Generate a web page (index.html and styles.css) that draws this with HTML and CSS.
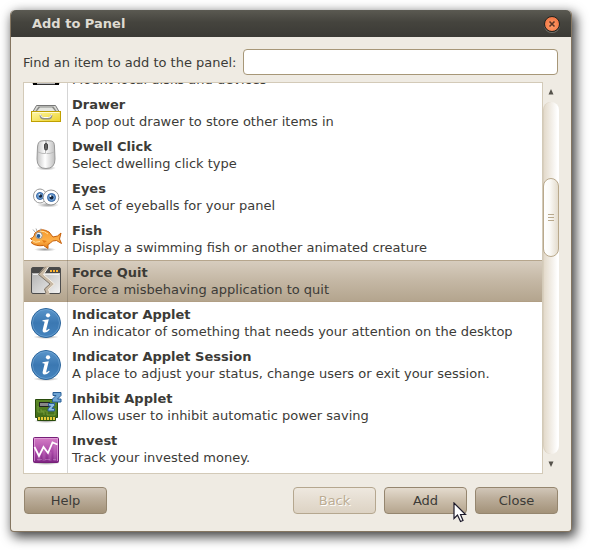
FILE: index.html
```html
<!DOCTYPE html>
<html lang="en">
<head>
<meta charset="utf-8">
<title>Add to Panel</title>
<link rel="stylesheet" href="styles.css">
</head>
<body>
<svg class="defs" width="0" height="0" aria-hidden="true">
  <defs>
    <linearGradient id="yellow" x2="1" y2="1"><stop stop-color="#fff9a8"/><stop offset="1" stop-color="#ecd22a"/></linearGradient>
    <linearGradient id="grey" x2="1" y2="0"><stop stop-color="#c4c4c4"/><stop offset=".45" stop-color="#fff"/><stop offset="1" stop-color="#bdbdbd"/></linearGradient>
    <linearGradient id="blue" x2="0" y2="1"><stop stop-color="#5b96cb"/><stop offset=".5" stop-color="#3b78b2"/><stop offset="1" stop-color="#4584be"/></linearGradient>
    <linearGradient id="orange" x2="0" y2="1"><stop stop-color="#f79a2c"/><stop offset=".6" stop-color="#fdb04a"/><stop offset="1" stop-color="#e47a12"/></linearGradient>
    <linearGradient id="green" x2="0" y2="1"><stop stop-color="#5d8a27"/><stop offset="1" stop-color="#3c6615"/></linearGradient>
    <linearGradient id="purple" x2="0" y2="1"><stop stop-color="#d57fc6"/><stop offset=".6" stop-color="#a845a6"/><stop offset="1" stop-color="#7d2482"/></linearGradient>
    <linearGradient id="pane" x2="1" y2="1"><stop stop-color="#aaa"/><stop offset="1" stop-color="#f4f4f4"/></linearGradient>
    <radialGradient id="shade"><stop stop-color="#000" stop-opacity=".4"/><stop offset="1" stop-color="#000" stop-opacity="0"/></radialGradient>
    <g id="info">
      <ellipse cx="16" cy="30" rx="13" ry="2" fill="url(#shade)"/>
      <circle cx="16" cy="16" r="14.5" fill="url(#blue)" stroke="#2b659c"/>
      <circle cx="16" cy="16" r="13.5" fill="none" stroke="#78abd9" stroke-opacity=".6"/>
      <circle cx="18" cy="8.3" r="2.1" fill="#fff"/>
      <path d="M12.5 13.2 18.8 12.3 16.3 22.3Q16 24 17.3 23.1L19 21.8 19.7 22.7Q16.8 25.8 14.3 25.5 12 25.2 12.8 22.2L14.6 15Q14.8 14.2 12.5 14.3Z" fill="#fff"/>
    </g>
  </defs>
</svg>

<main class="window">
  <header class="titlebar">
    <h1 class="title">Add to Panel</h1>
    <button class="close" type="button" aria-label="Close window"><svg width="8" height="8" viewBox="0 0 8 8"><path d="M1.5 1.5 6.5 6.5M6.5 1.5 1.5 6.5" stroke="#5b3525" stroke-width="1.6"/></svg></button>
  </header>
  <form class="content">
    <div class="find">
      <label for="search">Find an item to add to the panel:</label>
      <input id="search" class="entry" type="text">
    </div>

    <div class="browser">
      <ul class="items" role="listbox" aria-label="Panel items">
        <li class="item" role="option" aria-selected="false">
          <span class="icon"><svg width="32" height="32" viewBox="0 0 32 32"><path d="M3 20H29V28Q29 29.5 27 29.5H5Q3 29.5 3 28Z" fill="#b8b8bb" stroke="#333" /><path d="M3 28.5H7M25 28.5H29" stroke="#000" stroke-width="3"/></svg></span>
          <span class="text last-line"><span>Mount local disks and devices</span></span>
        </li>
        <li class="item" role="option" aria-selected="false">
          <span class="icon"><svg width="32" height="32" viewBox="0 0 32 32"><path d="M6.5 8.5H25.5L29 14.5H3Z" fill="#d9dad6" stroke="#777"/><path d="M8.5 9.5H23.5L26.5 14H5.5Z" fill="#8b8c88"/><path d="M10 10.5H22L25 14H7Z" fill="#e4e5e1"/><rect x="1.5" y="14.500" width="29" height="10" fill="url(#yellow)" stroke="#c0a000"/><path d="M2.5 15.500H29.5" stroke="#fffbd0"/><path d="M10.5 18Q11 21.500 13.500 21.500H18.500Q21 21.500 21.500 18" fill="none" stroke="#8f8f88" stroke-width="2"/><path d="M10.5 17.500Q11 20.500 13.500 20.500H18.500Q21 20.500 21.500 17.500" fill="none" stroke="#fff"/></svg></span>
          <span class="text"><strong>Drawer</strong><span>A pop out drawer to store other items in</span></span>
        </li>
        <li class="item" role="option" aria-selected="false">
          <span class="icon"><svg width="32" height="32" viewBox="0 0 32 32"><ellipse cx="16" cy="29" rx="10" ry="2.500" fill="url(#shade)"/><path d="M7.500 8Q8 2.500 11 2Q16 1 21.500 2Q24.500 2.500 24.500 8L25 20Q25 29.500 16 29.500T7 20Z" fill="url(#grey)" stroke="#999"/><path d="M8 13Q12 15 15.500 14.500V11M24 13Q20 15 16.500 14.500" fill="none" stroke="#bbb"/><path d="M16 2V5" stroke="#888"/><rect x="14.500" y="4.500" width="3" height="6.500" rx="1.500" fill="#666" stroke="#444"/></svg></span>
          <span class="text"><strong>Dwell Click</strong><span>Select dwelling click type</span></span>
        </li>
        <li class="item" role="option" aria-selected="false">
          <span class="icon"><svg width="32" height="32" viewBox="0 0 32 32"><ellipse cx="18" cy="24" rx="11" ry="2.500" fill="url(#shade)"/><ellipse cx="10" cy="15" rx="6.500" ry="7" fill="#fff" stroke="#999"/><circle cx="10" cy="15" r="3.500" fill="#6e9fd2" stroke="#3465a4"/><circle cx="10.500" cy="15" r="1.700" fill="#13243c"/><circle cx="9.500" cy="13.700" r=".8" fill="#fff"/><ellipse cx="21" cy="16.500" rx="7.800" ry="7.500" fill="#fff" stroke="#999"/><circle cx="21.500" cy="16.500" r="4" fill="#6e9fd2" stroke="#3465a4"/><circle cx="21.500" cy="16.500" r="2" fill="#13243c"/><circle cx="20.500" cy="15" r=".9" fill="#fff"/></svg></span>
          <span class="text"><strong>Eyes</strong><span>A set of eyeballs for your panel</span></span>
        </li>
        <li class="item" role="option" aria-selected="false">
          <span class="icon"><svg width="32" height="32" viewBox="0 0 32 32"><ellipse cx="15" cy="26.500" rx="11" ry="2" fill="url(#shade)"/><path d="M8 8Q12 5 19 9L23 14 27.500 13 31 10 29.500 16 31.500 20.500 26.500 17.500 22.500 18Q20 21 18 21.500L18 25.500 13.500 22.500Q6 23.500 1.500 20L2.500 17.500 .5 15.500Q4 15 5 10Z" fill="url(#orange)" stroke="#c55f0b"/><path d="M12 17 17 18 14 20Z" fill="#e37b16"/><path d="M2 17.500Q5 20.500 10 18.500M10 8Q15 8 18 11" fill="none" stroke="#ffe0a0"/><circle cx="9" cy="12.500" r="3.300" fill="#fff" stroke="#989086"/><circle cx="8.500" cy="13" r="1.900" fill="#285c94"/><path d="M5 9 3 6.500M7 8 6 5.500M10 8 11 5.500" stroke="#aaa"/></svg></span>
          <span class="text"><strong>Fish</strong><span>Display a swimming fish or another animated creature</span></span>
        </li>
        <li class="item selected" role="option" aria-selected="true">
          <span class="icon"><svg width="32" height="32" viewBox="0 0 32 32"><rect x="1.500" y="2.500" width="29" height="26" rx="1.500" fill="url(#pane)" stroke="#4c4c4c"/><path d="M2 3H30V8H2Z" fill="#494949"/><path d="M3 9.500H29" stroke="#fff" stroke-opacity=".7"/><path d="M20 6H22M23 6H25M26 6H28" stroke="#ffb52f" stroke-width="2"/><path d="M15 1 8.500 9 20 19 14 24 16 30H20L18.500 25 24.500 19 13.500 9.500 19 1Z" fill="#c8b9a5"/><path d="M15.500 2 8.500 9.500 20 19 14.500 24 16 28" fill="none" stroke="#7c7469"/><path d="M18.500 2 13.500 9.500 24.500 19 18.500 24.500 20 28" fill="none" stroke="#f7f2e9"/></svg></span>
          <span class="text"><strong>Force Quit</strong><span>Force a misbehaving application to quit</span></span>
        </li>
        <li class="item" role="option" aria-selected="false">
          <span class="icon"><svg width="32" height="32" viewBox="0 0 32 32"><use href="#info"/></svg></span>
          <span class="text"><strong>Indicator Applet</strong><span>An indicator of something that needs your attention on the desktop</span></span>
        </li>
        <li class="item" role="option" aria-selected="false">
          <span class="icon"><svg width="32" height="32" viewBox="0 0 32 32"><use href="#info"/></svg></span>
          <span class="text"><strong>Indicator Applet Session</strong><span>A place to adjust your status, change users or exit your session.</span></span>
        </li>
        <li class="item" role="option" aria-selected="false">
          <span class="icon"><svg width="32" height="32" viewBox="0 0 32 32"><ellipse cx="16" cy="30" rx="12" ry="2" fill="url(#shade)"/><path d="M5.500 8.500H27.500V26.500H25.500V29.500H7.500V26.500H5.500Z" fill="url(#green)" stroke="#284b0c"/><path d="M8 27.500H26" stroke="#e6c937" stroke-width="3" stroke-dasharray="2 1"/><path d="M8 15V21H14V24M17 20V24H25V17M11 18V20H16" fill="none" stroke="#83ac45" stroke-opacity=".7"/><rect x="9.500" y="11.500" width="10" height="4" fill="#888" stroke="#222"/><path d="M18.500 12.500H24.500V14.500L22 17.500H24.500V20H18V18L20.500 15H18.500Z" fill="#8ebbe2" stroke="#285f96"/><path d="M23 1.500H31V4.500L27.500 8H31V11H22.500V8L26 4.500H23Z" fill="#70a5d4" stroke="#285f96"/></svg></span>
          <span class="text"><strong>Inhibit Applet</strong><span>Allows user to inhibit automatic power saving</span></span>
        </li>
        <li class="item" role="option" aria-selected="false">
          <span class="icon"><svg width="32" height="32" viewBox="0 0 32 32"><ellipse cx="16" cy="30" rx="14" ry="2" fill="url(#shade)"/><rect x="3.500" y="4.500" width="25" height="25" rx="1" fill="url(#purple)" stroke="#762078"/><path d="M4.500 28V5.500H27.500V28" fill="none" stroke="#e6a8df" stroke-opacity=".7"/><path d="M9 21V28M14 17V28M20 19V28M25 12V28" stroke="#db9ad5" stroke-opacity=".25" stroke-width="3"/><path d="M4.500 14 9 23 13.500 14 18 20 22.500 9.500 27.500 11.500" fill="none" stroke="#fff" stroke-width="1.800"/><path d="M7 26.500H26" stroke="#d8a1dc" stroke-opacity=".4" stroke-dasharray="5 3"/></svg></span>
          <span class="text"><strong>Invest</strong><span>Track your invested money.</span></span>
        </li>
      </ul>
      <div class="scrollbar">
        <button class="step" type="button" aria-label="Scroll up"><svg width="6" height="6" viewBox="0 0 6 6"><path d="M3 0 5.500 5.500H.5Z" fill="#55524b"/></svg></button>
        <div class="trough"><div class="thumb"><i></i><i></i><i></i></div></div>
        <button class="step" type="button" aria-label="Scroll down"><svg width="6" height="6" viewBox="0 0 6 6"><path d="M3 6 5.500 .5H.5Z" fill="#55524b"/></svg></button>
      </div>
    </div>

    <footer class="actions">
      <button class="button help" type="button">Help</button>
      <button class="button" type="button" disabled>Back</button>
      <button class="button hover" type="button">Add<svg class="pointer" width="14" height="21" viewBox="0 0 14 21"><path d="M1 1V16.500L4.500 13 7.500 19.500 10 18.500 7.500 12.500H12.500Z" fill="#fff" stroke="#1d1a2a" stroke-width="1.200"/></svg></button>
      <button class="button" type="button">Close</button>
    </footer>
  </form>
</main>
</body>
</html>
```
FILE: styles.css
```css
* {
  box-sizing: border-box;
}

body {
  display: flex;
  height: 100vh;
  margin: 0;
  padding: 10px 18px 18px 10px;
  background: #fff;
  color: #3c3b37;
  font: 13px/17px "DejaVu Sans", sans-serif;
}

button,
input {
  color: inherit;
  font: inherit;
}

.defs {
  position: absolute;
}

.window {
  display: flex;
  flex: 1;
  flex-direction: column;
  min-width: 0;
  border: 1px solid #857661;
  border-top: 0;
  border-radius: 5px 5px 4px 4px;
  background: #efebe3;
  box-shadow: 3px 4px 12px 1px rgba(0, 0, 0, 0.75);
}

.titlebar {
  display: flex;
  align-items: center;
  justify-content: space-between;
  height: 27px;
  padding: 0 11px 0 21px;
  border-radius: 5px 5px 0 0;
  background: linear-gradient(#5b5a52, #45443e 45%, #3b3a35);
}

.title {
  margin: 0;
  color: #dfdbd2;
  font-size: 13px;
}

.close {
  display: flex;
  align-items: center;
  justify-content: center;
  width: 16px;
  height: 16px;
  padding: 0;
  border: 1px solid #25241f;
  border-radius: 50%;
  background: radial-gradient(circle at 50% 60%, #ff9d68, #f47a48 70%, #d9633c);
  box-shadow: 0 1px 0 #77756e;
}

.content {
  display: flex;
  flex: 1;
  flex-direction: column;
  min-height: 0;
  padding: 12px 12px 17px;
}

.find {
  display: flex;
  align-items: center;
  gap: 6px;
  margin-bottom: 7px;
  padding-right: 1px;
}

.entry {
  flex: 1;
  min-width: 0;
  height: 26px;
  padding: 0 6px;
  border: 1px solid #a79778;
  border-radius: 4px;
  outline: 0;
  background: #fff;
}

.browser {
  display: flex;
  flex: 1;
  min-height: 0;
}

.items {
  display: flex;
  flex: 1;
  flex-direction: column;
  justify-content: flex-end;
  min-width: 0;
  margin: 0;
  padding: 0 0 3px;
  overflow: hidden;
  border: 1px solid #d3cab8;
  background: linear-gradient(90deg, #fff 43px, #d5d5d5 43px, #d5d5d5 44px, #fff 44px);
  list-style: none;
}

.item {
  display: flex;
  flex: none;
  height: 42px;
}

.selected {
  background: linear-gradient(#d8cec0, #c4b7a4 50%, #b3a48d);
  box-shadow: inset 0 1px #b6a68d, inset 0 -1px #b19f85;
}

.icon {
  display: flex;
  align-items: center;
  justify-content: center;
  width: 44px;
  border-right: 1px solid transparent;
}

.selected .icon {
  border-color: rgba(0, 0, 0, 0.15);
}

.text {
  display: flex;
  flex-direction: column;
  justify-content: center;
  padding-left: 4px;
  white-space: nowrap;
}

.last-line {
  justify-content: flex-end;
  padding-bottom: 4px;
}

.scrollbar {
  display: flex;
  flex-direction: column;
  width: 16px;
}

.step {
  display: flex;
  align-items: center;
  justify-content: center;
  height: 20px;
  padding: 0;
  border: 0;
  background: none;
}

.trough {
  flex: 1;
  padding-top: 76px;
  border: 1px solid #d9cfbe;
  border-width: 0 0 0 1px;
  border-radius: 8px;
  background: linear-gradient(90deg, #e3dacb, #fff 90%);
}

.thumb {
  display: flex;
  flex-direction: column;
  align-items: center;
  justify-content: center;
  gap: 2px;
  height: 79px;
  margin-left: -1px;
  border: 1px solid #b9a98c;
  border-radius: 8px;
  background: linear-gradient(90deg, #fff, #fbfaf7 40%, #e4dccd);
}

.thumb i {
  width: 6px;
  height: 1px;
  background: #b9a98c;
}

.actions {
  display: flex;
  gap: 8px;
  margin-top: 13px;
  padding: 0 1px;
}

.button {
  position: relative;
  width: 83px;
  height: 27px;
  padding: 0;
  border: 1px solid #95866f;
  border-radius: 4px;
  background: linear-gradient(#d1c6b8, #bcae9b 40%, #a39279);
}

.help {
  margin-right: auto;
}

.hover {
  background: linear-gradient(#e4dbce, #cbbeab 50%, #b5a58e);
}

.button:disabled {
  border-color: #b5a78f;
  background: linear-gradient(#eee8df, #e5ddd1 50%, #ddd3c4);
  color: #bcac93;
  text-shadow: 1px 1px #fff;
}

.pointer {
  position: absolute;
  top: 14px;
  left: 68px;
  z-index: 1;
}
```
